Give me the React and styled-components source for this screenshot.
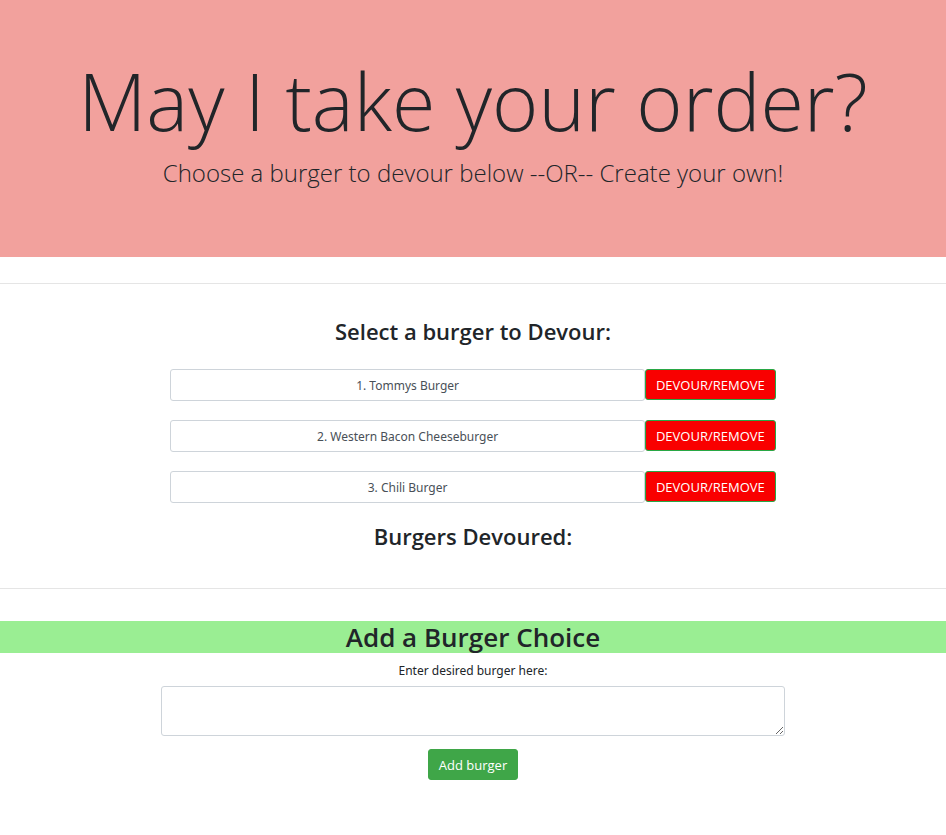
import React from "react";
import styled, { createGlobalStyle } from "styled-components";

const GlobalStyle = createGlobalStyle`
  *, *::before, *::after { box-sizing: border-box; }
  body {
    margin: 0;
    background: #fff;
    color: #212529;
    font-family: "Open Sans", "Noto Sans", sans-serif;
    font-size: 13px;
    line-height: 20px;
    text-align: center;
  }
`;

const Hero = styled.header`
  padding: 51px 12px 64px;
  background: #f2a19d;
`;

const HeroTitle = styled.h1`
  margin: 0 0 1px;
  font-size: 79px;
  font-weight: 300;
  line-height: 100px;
`;

const HeroLead = styled.p`
  margin: 0;
  font-size: 24px;
  font-weight: 300;
  line-height: 41px;
`;

const Divider = styled.hr`
  margin: 0;
  border: 0;
  border-top: 1px solid #e5e5e5;
`;

const Menu = styled.main`
  padding: 26px 0 0;
`;

const Section = styled.section`
  padding: 31px 0 36px;
`;

const SectionTitle = styled.h2`
  margin: 0;
  font-size: 22px;
  font-weight: 600;
  line-height: 32px;
`;

const BurgerList = styled.ol`
  display: grid;
  gap: 19px;
  width: 64%;
  margin: 22px auto 17px;
  padding: 0;
  list-style: none;
`;

const BurgerRow = styled.li`
  display: flex;
  align-items: flex-start;
`;

const BurgerName = styled.span`
  flex: 1;
  padding: 6px 8px 4px;
  border: 1px solid #ced4da;
  border-radius: 3px;
  font-family: "Noto Sans", "Open Sans", sans-serif;
  font-size: 12px;
  line-height: 20px;
  color: #495057;
`;

const Button = styled.button`
  padding: 5px 10px 3px;
  border: 1px solid ${(p) => (p.$danger ? "#28a745" : "#3fa648")};
  border-radius: 3px;
  background: ${(p) => (p.$danger ? "#f90000" : "#3fa648")};
  color: #fff;
  font: inherit;
  line-height: 21px;
  cursor: pointer;
`;

const FormTitle = styled.h2`
  margin: 32px 0 8px;
  background: #9aee93;
  font-size: 26px;
  font-weight: 600;
  line-height: 32px;
`;

const Form = styled.form`
  display: flex;
  flex-direction: column;
  align-items: center;
`;

const FieldLabel = styled.label`
  font-family: "Noto Sans", "Open Sans", sans-serif;
  font-size: 12px;
`;

const BurgerInput = styled.textarea`
  width: 66%;
  height: 50px;
  margin: 5px 0 13px;
  padding: 4px 8px;
  border: 1px solid #ced4da;
  border-radius: 3px;
  font: inherit;
  color: #495057;
  resize: vertical;
`;

const burgers = ["Tommys Burger", "Western Bacon Cheeseburger", "Chili Burger"];

export default function App() {
  return (
    <>
      <GlobalStyle />
      <Hero>
        <HeroTitle>May I take your order?</HeroTitle>
        <HeroLead>Choose a burger to devour below --OR-- Create your own!</HeroLead>
      </Hero>
      <Menu>
        <Divider />
        <Section>
          <SectionTitle>Select a burger to Devour:</SectionTitle>
          <BurgerList>
            {burgers.map((name, i) => (
              <BurgerRow key={name}>
                <BurgerName>{i + 1}. {name}</BurgerName>
                <Button type="button" $danger>DEVOUR/REMOVE</Button>
              </BurgerRow>
            ))}
          </BurgerList>
          <SectionTitle>Burgers Devoured:</SectionTitle>
        </Section>
        <Divider />
        <FormTitle>Add a Burger Choice</FormTitle>
        <Form onSubmit={(e) => e.preventDefault()}>
          <FieldLabel htmlFor="burger">Enter desired burger here:</FieldLabel>
          <BurgerInput id="burger" />
          <Button type="submit">Add burger</Button>
        </Form>
      </Menu>
    </>
  );
}
